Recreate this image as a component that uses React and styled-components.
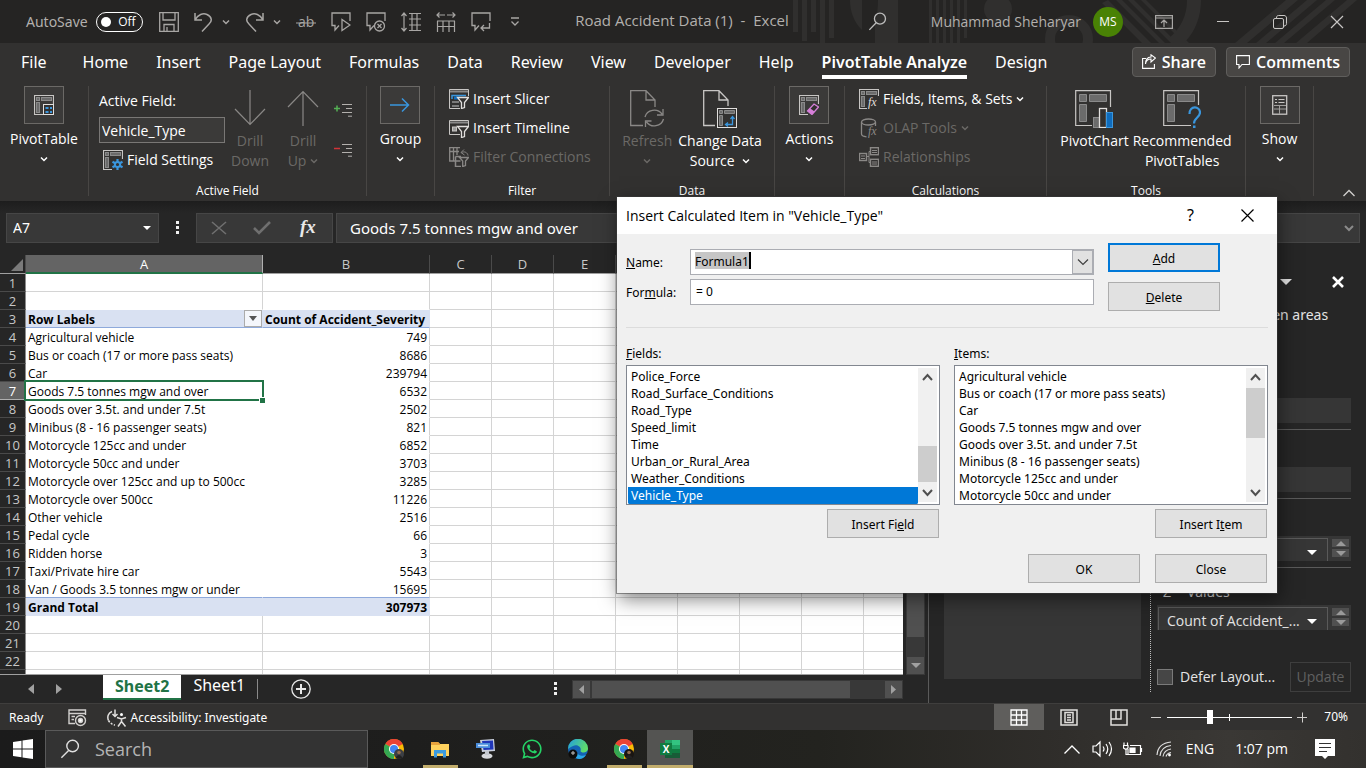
import React from "react";
import styled, { createGlobalStyle } from "styled-components";
import { FaWhatsapp } from "react-icons/fa";

const Global = createGlobalStyle`
  *, *::before, *::after { box-sizing: border-box; }
  html, body, #root { height: 100%; }
  body { margin: 0; overflow: hidden; background: #262626; }
  body, button, input, select {
    font-family: "Open Sans", "Noto Sans", sans-serif;
    font-size: 14px;
    line-height: 20px;
  }
  button { padding: 0; border: 0; background: none; color: inherit; cursor: default; }
  input { min-width: 0; }
  svg { display: block; flex: none; }
`;

const wideFont = `font-family: "Noto Sans", "Open Sans", sans-serif;`;

const Shell = styled.main`
  position: relative;
  display: flex;
  flex-direction: column;
  height: 100vh;
  color: #fff;
`;

/* ---------- small drawings ---------- */

const Svg = ({ w = 20, h = w, children, ...rest }) => (
  <svg width={w} height={h} viewBox={`0 0 ${w} ${h}`} fill="none" aria-hidden="true" {...rest}>
    {children}
  </svg>
);

const Chevron = ({ color = "#fff", w = 8, sw = 1.5 }) => (
  <Svg w={w} h={Math.round(w / 2) + 2}>
    <path d={`M1 1.5 L${w / 2} ${w / 2 + 0.5} L${w - 1} 1.5`} stroke={color} strokeWidth={sw} />
  </Svg>
);

const Triangle = ({ dir = "down", color = "#fff", w = 10, h = 5 }) => {
  const d = {
    down: `M0 0H${w}L${w / 2} ${h}Z`,
    up: `M0 ${h}H${w}L${w / 2} 0Z`,
    left: `M${w} 0V${h}L0 ${h / 2}Z`,
    right: `M0 0V${h}L${w} ${h / 2}Z`,
  }[dir];
  return <Svg w={w} h={h}><path d={d} fill={color} /></Svg>;
};

const Magnifier = ({ w = 20, color = "#bdbdbd" }) => (
  <svg width={w} height={w} viewBox="0 0 20 20" fill="none" aria-hidden="true">
    <circle cx="12.6" cy="7" r="5.8" stroke={color} strokeWidth="1.4" />
    <path d="M8.6 11.4L1.4 18.8" stroke={color} strokeWidth="1.4" />
  </svg>
);

const Grid20 = ({ children, cut = "M19.5 9V.5H.5V19.5H9" }) => (
  <Svg w={20}>
    <path d={cut} stroke="#c8c6c4" strokeWidth="1.2" />
    <rect x="2.5" y="2.5" width="3" height="3" fill="#6b6b6b" stroke="#8a8a8a" />
    <rect x="7.5" y="2.5" width="10" height="3" fill="#6b6b6b" stroke="#8a8a8a" />
    <rect x="2.5" y="7.5" width="3" height="10" fill="#6b6b6b" stroke="#8a8a8a" />
    {children}
  </Svg>
);

const PivotTableIcon = () => (
  <Grid20>
    <rect x="9.5" y="9.5" width="10" height="10" fill="#323130" stroke="#e1dfdd" />
    <path d="M11.5 12h3v2h-3zM16 12h2v2h-2zM11.5 16h3v2h-3zM16 16h2v2h-2z" fill="#3a96dd" />
  </Grid20>
);
const FieldSettingsIcon = () => (
  <Grid20>
    <path d="M14.5 9v11M9.500 11.800l10 5.500M9.500 17.300l10-5.500" stroke="#3a96dd" strokeWidth="2.200" />
    <circle cx="14.5" cy="14.5" r="2.600" fill="#323130" stroke="#3a96dd" strokeWidth="2" />
  </Grid20>
);
const EraserIcon = () => (
  <Grid20>
    <path d="M8.5 16L15 9L19.5 12L13 19.5Z" fill="#323130" stroke="#d67fd9" strokeWidth="1.3" />
    <path d="M8.5 16L11 13.3L15.6 16.6L13 19.5Z" fill="#d67fd9" />
  </Grid20>
);
const FxText = ({ x = 9, y = 17, color = "#e1dfdd" }) => (
  <text x={x} y={y} fill={color} fontFamily="Liberation Serif, serif" fontStyle="italic" fontSize="12">fx</text>
);
const FieldsIcon = () => (
  <Grid20 cut="M19.5 7V.5H.5V19.5H8"><FxText x={9} /></Grid20>
);
const OlapIcon = () => (
  <Svg w={20}>
    <ellipse cx="9.5" cy="4" rx="7" ry="3" stroke="#8a8886" strokeWidth="1.3" />
    <path d="M2.5 4V16c0 1.500 2 2.500 5 2.800M16.500 4v4" stroke="#8a8886" strokeWidth="1.300" />
    <FxText x={9} color="#8a8886" />
  </Svg>
);
const RelationIcon = () => (
  <Svg w={20} stroke="#8a8886">
    <path d="M7 9.500H10V4.500H12M10 9.500V15.500H12" />
    <rect x=".5" y="6.500" width="7" height="7" strokeWidth="1.400" />
    <rect x="11.500" y=".7" width="8" height="7" strokeWidth="1.400" />
    <rect x="11.500" y="12.300" width="8" height="7" strokeWidth="1.400" />
    <path d="M2 9h4M2 11.500h4M13 3.500h5M13 5.500h5M13 15h5M13 17h5" />
  </Svg>
);
const funnel = "M8.500 8.500H19.500L15.500 13.500V18.500L12.500 19.500V13.500Z";
const SlicerIcon = () => (
  <Svg w={20}>
    <path d="M19.500 7V.5H.5V19.500H11" stroke="#c8c6c4" />
    <path d="M1 2.500H19" stroke="#8a8a8a" strokeWidth="2" />
    <path d="M3 10V6.500H17" stroke="#3a96dd" strokeWidth="1.500" />
    <path d="M5 9h6" stroke="#0f6cbd" strokeWidth="3" />
    <path d="M3 13h7M3 17h7" stroke="#7a7a7a" strokeWidth="2" />
    <path d={funnel} fill="#323130" stroke="#e1dfdd" strokeWidth="1.300" />
  </Svg>
);
const TimelineIcon = () => (
  <Svg w={20}>
    <path d="M19.500 8V2.500H.5V16.500H11" stroke="#c8c6c4" />
    <path d="M1 4.500H19" stroke="#8a8a8a" strokeWidth="2" />
    <rect x="3.500" y="9" width="4" height="4" fill="#9a9a9a" stroke="#c8c6c4" />
    <path d={funnel} fill="#323130" stroke="#e1dfdd" strokeWidth="1.300" />
  </Svg>
);
const FilterConnIcon = () => (
  <Svg w={20} stroke="#8a8886">
    <path d="M11 .7H.7V14H6M.7 4.500H10M4.500 .7V14M8 .7V8" strokeWidth="1.300" />
    <path d="M6.500 9.500H12M6.500 9.500V19.500H12M6.500 14h5" strokeWidth="1.500" />
    <path d="M12.500 5.500c3-1.500 6 0 6.500 3M12 5.500l3-3M12 5.500l3.500 2.500" />
    <path d="M10.500 10.500H19.500L16.500 14V18.500L13.700 19.500V14Z" fill="#323130" strokeWidth="1.300" />
  </Svg>
);
const DrillArrow = ({ up }) => (
  <Svg w={32} h={36}>
    <path d={up ? "M16 36V1.500M1 17L16 1.500L31 17" : "M16 0V34.500M1 19L16 34.500L31 19"} stroke="#8a8886" strokeWidth="1.200" />
  </Svg>
);
const ExpandIcon = ({ minus }) => (
  <Svg w={18} h={14}>
    <path d={minus ? "M0 5.500H6" : "M0 5.500H6M3 2.500V8.500"} stroke={minus ? "#d13438" : "#54b054"} strokeWidth="1.500" />
    <path d="M8 1.500H18M12 5.500H18M8 9.500H18M14 13.200H18" stroke="#b3b0ad" />
  </Svg>
);
const RefreshIcon = () => (
  <Svg w={36} h={38} stroke="#8a8886" strokeWidth="1.300">
    <path d="M14 35.500H1.700V.7H17L26 10V17M17 .7V10H26" />
    <path d="M16 27a9.500 9 0 0 1 17-3M34 19v6h-6M34.500 29a9.500 9 0 0 1-17 3M16.500 37v-6h6" />
  </Svg>
);
const ChangeSourceIcon = () => (
  <Svg w={36} h={38}>
    <path d="M13 35.500H1.700V.7H17L26 10V16M17 .7V10H26" stroke="#c8c6c4" strokeWidth="1.300" />
    <rect x="15.500" y="18.500" width="19" height="19" fill="#323130" stroke="#e1dfdd" />
    <path d="M17.500 20.500h3v3h-3zM22.500 20.500h10v3h-10zM17.500 25.500h3v10h-3z" fill="#6b6b6b" stroke="#8a8a8a" />
    <path d="M24 34.500H30.500V27M26 32.500l-2.500 2 2.500 2M28.500 29l2-2.500 2 2.500" stroke="#3a96dd" strokeWidth="1.300" />
  </Svg>
);
const Grid38 = ({ children, cut }) => (
  <Svg w={38}>
    <path d={cut} stroke="#c8c6c4" strokeWidth="1.200" />
    <path d="M4.500 4.500h7v7h-7zM14.500 4.500h17v7h-17zM4.500 14.500h7v17h-7z" fill="#6b6b6b" stroke="#8a8a8a" />
    {children}
  </Svg>
);
const PivotChartIcon = () => (
  <Grid38 cut="M35.500 17V.700H.7V35.500H17">
    <rect x="18.500" y="27.500" width="6" height="10" fill="#6b6b6b" stroke="#8a8a8a" />
    <rect x="24.500" y="18.500" width="7" height="19" fill="#323130" stroke="#e1dfdd" strokeWidth="1.300" />
    <rect x="31.500" y="22.500" width="6" height="15" fill="#0f6cbd" stroke="#3a96dd" />
  </Grid38>
);
const RecommendedIcon = () => (
  <Grid38 cut="M35.500 15V.700H.7V35.500H28">
    <path d="M26.500 24c0-9 10.500-8 10.500-1.500c0 5-6 5-6 11" stroke="#3a96dd" strokeWidth="2.200" />
    <rect x="30" y="35.500" width="2.500" height="2.500" fill="#3a96dd" />
  </Grid38>
);
const ShowIcon = () => (
  <Svg w={16} h={20}>
    <rect x=".7" y=".7" width="14" height="18.500" stroke="#c8c6c4" strokeWidth="1.300" />
    <path d="M3 4.500h2M6.500 4.500h6M3 7.500h2M6.500 7.500h6" stroke="#c8c6c4" />
    <path d="M2 10.500H14M2 14H14M7.500 10.500V19" stroke="#a19f9d" />
  </Svg>
);

/* ---------- title bar ---------- */

const TitleBar = styled.header`
  position: relative;
  display: flex;
  align-items: center;
  height: 43px;
  flex: none;
  background: #252423;
  color: #b3b0ad;
  overflow: hidden;
`;
const Artwork = styled.svg`
  position: absolute;
  right: 0;
  top: 0;
`;
const QuickAccess = styled.div`
  ${wideFont}
  display: flex;
  align-items: center;
  flex: 1 1 0;
  padding-left: 26px;
  gap: 8px;
`;
const SwitchButton = styled.button`
  display: flex;
  align-items: center;
  justify-content: space-between;
  width: 47px;
  height: 20px;
  padding: 0 6px 0 4px;
  border: 1px solid #fff;
  border-radius: 10px;
  color: #fff;
  font-size: 12px;
  line-height: 16px;
  &::before { content: ""; width: 10px; height: 10px; border-radius: 5px; background: #fff; }
`;
const ToolStrip = styled.div`
  display: flex;
  align-items: center;
  gap: 15px;
  padding-left: 8px;
`;
const Pair = styled.span`
  display: flex;
  align-items: center;
  gap: 9px;
`;
const IconButton = styled.button`
  position: relative;
  display: grid;
  place-items: center;
`;
const DocTitle = styled.div`
  position: relative;
  white-space: pre;
  font-size: 15px;
  padding: 0 6px 3px 0;
`;
const TitleRight = styled.div`
  position: relative;
  display: flex;
  align-items: center;
  justify-content: flex-end;
  flex: 1 1 0;
  padding-right: 22px;
`;
const Avatar = styled.span`
  display: grid;
  place-items: center;
  width: 30px;
  height: 30px;
  margin: 0 32px 0 12px;
  border-radius: 15px;
  background: #498205;
  color: #fff;
  font-size: 12px;
`;
const WindowButtons = styled.div`
  display: flex;
  align-items: center;
  gap: 43px;
`;
const SearchSlot = styled.span`
  margin-right: 44px;
`;

const g = "#a8a6a4";
const SaveIcon = () => (
  <Svg w={20} stroke={g} strokeWidth="1.300"><path d="M.7.7H19.300V19.300H.7ZM4 .7V8H16V.7M5 19V12.500H15V19M8 19V15" /></Svg>
);
const UndoIcon = ({ flip }) => (
  <Svg w={19} h={20} stroke={g} strokeWidth="1.500" transform={flip ? "scale(-1 1)" : undefined}>
    <path d="M1 1V8H8M1 8C4 2.500 9 .8 13 2.500C18 5 18.500 9 15 12L8 19.500" />
  </Svg>
);
const StrikeIcon = () => (
  <Svg w={20}>
    <text x="2" y="15" fill={g} fontSize="14" fontFamily="Open Sans, sans-serif">ab</text>
    <path d="M0 11H20" stroke={g} />
  </Svg>
);
const CommentIcon = ({ children }) => (
  <Svg w={20} stroke={g} strokeWidth="1.300">
    <path d="M19 9V1H1V13.500H4V18L8 13.500" />
    {children}
  </Svg>
);
const RowHeightIcon = () => (
  <Svg w={20} stroke={g} strokeWidth="1.200"><path d="M3 1V19M.5 4L3 1L5.500 4M.5 16L3 19L5.500 16M8 1.500H20M8 7H20M8 13H20M8 18.500H20M11 1V19M16 1V19" /></Svg>
);
const ColWidthIcon = () => (
  <Svg w={20} stroke={g} strokeWidth="1.200"><path d="M1 3H9M11 3H19M3.500 .5L1 3L3.500 5.500M16.500 .5L19 3L16.500 5.500M1.500 9V20M7 9V20M13 9V20M18.500 9V20M1 9H19M1 14.500H19" /></Svg>
);

function TitleRow() {
  return (
    <TitleBar>
      <Artwork width="580" height="43" viewBox="0 0 580 43" fill="#302f2e" aria-hidden="true">
        <path d="M7 0h5v32H7zM16 0h5v41h-5zM25 0h5v32h-5zM34 0h5v43h-5zM43 0h5v38h-5zM64 0h12v30C68 22 64 12 64 0ZM92 0h20v43H89V22C91 16 92 8 92 0ZM143 0h3v43h-3zM150 0h3v43h-3zM157 0h3v43h-3zM164 0h3v43h-3zM171 0h3v43h-3zM178 0h3v38h-3z" />
        <circle cx="212" cy="9" r="14" />
        <circle cx="283" cy="39" r="19" fill="none" stroke="#302f2e" strokeWidth="10" />
        <path d="M322 0l43 43h-9L316 3zM336 0l43 43h-6L330 0zM348 0l43 43h-6L342 0zM360 0l43 43h-5L355 0zM449 43L500 0h12L461 43zM470 43L521 0h10L480 43zM489 43L540 0h9L498 43zM510 43L561 0h10L521 43z" />
        <path d="M408 0q0 26-20 43M414 0" stroke="#302f2e" strokeWidth="14" fill="none" />
      </Artwork>
      <QuickAccess>
        <span>AutoSave</span>
        <SwitchButton type="button" role="switch" aria-checked="false" aria-label="AutoSave">Off</SwitchButton>
        <ToolStrip>
          <IconButton aria-label="Save"><SaveIcon /></IconButton>
          <Pair><IconButton aria-label="Undo"><UndoIcon /></IconButton><Chevron color={g} /></Pair>
          <Pair><IconButton aria-label="Redo"><UndoIcon flip /></IconButton><Chevron color={g} /></Pair>
          <IconButton aria-label="Strikethrough"><StrikeIcon /></IconButton>
          <IconButton aria-label="Next comment"><CommentIcon><path d="M11 7.500V18.500L19 13Z" /></CommentIcon></IconButton>
          <IconButton aria-label="Delete comment"><CommentIcon><circle cx="13.500" cy="14" r="5" /><path d="M11.500 12l4 4M15.500 12l-4 4" /></CommentIcon></IconButton>
          <IconButton aria-label="Row height"><RowHeightIcon /></IconButton>
          <IconButton aria-label="Column width"><ColWidthIcon /></IconButton>
          <IconButton aria-label="Previous comment"><CommentIcon><path d="M18.500 11V16H10M13 13L10 16L13 19" /></CommentIcon></IconButton>
          <IconButton aria-label="Customize">
            <Svg w={18} h={10} stroke={g} strokeWidth="1.300"><path d="M5 1H13M5.500 4.500L9 8L12.500 4.500" /></Svg>
          </IconButton>
        </ToolStrip>
      </QuickAccess>
      <DocTitle>{"Road Accident Data (1)  -  Excel"}</DocTitle>
      <TitleRight>
        <SearchSlot><Magnifier w={19} /></SearchSlot>
        <span>Muhammad Sheharyar</span>
        <Avatar>MS</Avatar>
        <WindowButtons>
          <IconButton aria-label="Ribbon display options">
            <Svg w={18} h={14} stroke={g} strokeWidth="1.200"><path d="M.6.6H17.400V13.400H.6ZM1 3H17M9 12V5.500M6 8L9 5L12 8" /></Svg>
          </IconButton>
          <IconButton aria-label="Minimize"><Svg w={14} h={14} stroke="#c8c6c4"><path d="M1 6.500H13" /></Svg></IconButton>
          <IconButton aria-label="Restore">
            <Svg w={14} h={14} stroke="#c8c6c4"><rect x=".5" y="3.500" width="10" height="10" rx="1.500" /><path d="M3.500 3C3.500 1.500 4 .5 5.500 .5H11c1.500 0 2.500 1 2.500 2.500V8.500c0 1.500-1 2.500-2.500 2.500" /></Svg>
          </IconButton>
          <IconButton aria-label="Close window"><Svg w={14} h={14} stroke="#c8c6c4" strokeWidth="1.200"><path d="M1 1L13 13M13 1L1 13" /></Svg></IconButton>
        </WindowButtons>
      </TitleRight>
    </TitleBar>
  );
}

/* ---------- ribbon ---------- */

const TabRow = styled.nav`
  display: flex;
  align-items: center;
  height: 37px;
  flex: none;
  gap: 28px;
  padding: 0 16px 0 21px;
  background: #323130;
`;
const Tab = styled.button`
  ${wideFont}
  position: relative;
  font-size: 16px;
  line-height: 24px;
  white-space: nowrap;
  margin-right: ${(p) => (p.$first ? 8 : 0)}px;
  font-weight: ${(p) => (p.$active ? 600 : 400)};
  &::after {
    content: "";
    display: ${(p) => (p.$active ? "block" : "none")};
    position: absolute;
    left: 0;
    right: 0;
    bottom: -5px;
    height: 4px;
    background: #fff;
  }
`;
const TabActions = styled.div`
  display: flex;
  gap: 10px;
  margin-left: auto;
`;
const ActionButton = styled.button`
  display: flex;
  align-items: center;
  gap: 6px;
  height: 30px;
  padding: 0 9px;
  border: 1px solid #5f5e5c;
  border-radius: 4px;
  background: #484644;
  font-size: 16px;
  font-weight: 600;
`;

const RibbonBar = styled.div`
  display: flex;
  height: 121px;
  flex: none;
  padding-top: 6px;
  background: #323130;
`;
const GroupBox = styled.section`
  display: flex;
  flex-direction: column;
  flex: none;
  width: ${(p) => p.$w}px;
  height: 110px;
  border-right: 1px solid #484644;
`;
const GroupBody = styled.div`
  display: flex;
  flex: 1;
  min-height: 0;
  justify-content: ${(p) => p.$justify || "center"};
  padding: ${(p) => p.$pad || "0"};
  gap: ${(p) => p.$gap || 0}px;
`;
const GroupLabel = styled.div`
  height: 12px;
  font-size: 12px;
  line-height: 14px;
  text-align: center;
`;
const BoxedButton = styled.button`
  display: flex;
  flex-direction: column;
  align-items: center;
  height: 83px;
`;
const IconFrame = styled.span`
  display: grid;
  place-items: center;
  width: 40px;
  height: 38px;
  margin-bottom: 5px;
  border: 1px solid #6b6966;
  background: #3b3a39;
`;
const BigButton = styled.button`
  display: flex;
  flex-direction: column;
  align-items: center;
  height: 86px;
  padding-top: 4px;
  white-space: pre;
  color: ${(p) => (p.disabled ? "#6b6966" : "#fff")};
`;
const BigIcon = styled.span`
  display: grid;
  place-items: start center;
  height: 41px;
`;
const WithChevron = styled.span`
  display: flex;
  align-items: center;
  justify-content: center;
  gap: 4px;
  min-height: 20px;
`;
const Stack = styled.div`
  display: flex;
  flex-direction: column;
  gap: ${(p) => p.$gap || 0}px;
`;
const DrillPair = styled.div`
  display: flex;
  gap: 18px;
`;
const Lines = styled(Stack)`
  height: 84px;
  justify-content: space-between;
`;
const LineButton = styled.button`
  display: flex;
  align-items: center;
  gap: 4px;
  height: ${(p) => p.$h || 26}px;
  padding-left: ${(p) => p.$inset || 0}px;
  white-space: nowrap;
  color: ${(p) => (p.disabled ? "#6b6966" : "#fff")};
`;
const FieldLabel = styled.label`
  height: 28px;
  line-height: 30px;
`;
const FieldInput = styled.input`
  width: 126px;
  height: 26px;
  margin-top: 3px;
  padding: 0 2px;
  border: 1px solid #797775;
  background: #3b3a39;
  color: #fff;
`;
const Collapse = styled.button`
  align-self: flex-end;
  margin: 0 11px 4px auto;
`;

const tabs = ["File", "Home", "Insert", "Page Layout", "Formulas", "Data", "Review", "View", "Developer", "Help", "PivotTable Analyze", "Design"];

const Boxed = ({ icon, label }) => (
  <BoxedButton type="button">
    <IconFrame>{icon}</IconFrame>
    <span>{label}</span>
    <WithChevron><Chevron /></WithChevron>
  </BoxedButton>
);

const Group = ({ w, label, children, ...body }) => (
  <GroupBox $w={w}>
    <GroupBody {...body}>{children}</GroupBody>
    <GroupLabel>{label}</GroupLabel>
  </GroupBox>
);

function Ribbon() {
  return (
    <>
      <TabRow>
        {tabs.map((t, i) => (
          <Tab key={t} type="button" $first={i === 0} $active={t === "PivotTable Analyze"}>{t}</Tab>
        ))}
        <TabActions>
          <ActionButton type="button">
            <Svg w={14} h={15} stroke="#fff" strokeWidth="1.100"><path d="M4 4.500H.6V14.400H12.400V10M3.500 10C4 6 6.500 5 9 5V8L13.500 4L9 .8V3C5.500 3.200 3.500 6 3.500 10Z" /></Svg>
            Share
          </ActionButton>
          <ActionButton type="button">
            <Svg w={14} h={14} stroke="#fff" strokeWidth="1.100"><path d="M.6.6H13.400V9.500H6L3 13V9.500H.6Z" /></Svg>
            Comments
          </ActionButton>
        </TabActions>
      </TabRow>
      <RibbonBar>
        <Group w={89}><Boxed icon={<PivotTableIcon />} label="PivotTable" /></Group>
        <Group w={278} label="Active Field" $justify="flex-start" $pad="0 0 0 10px" $gap={6}>
          <Stack>
            <FieldLabel htmlFor="active-field">Active Field:</FieldLabel>
            <FieldInput id="active-field" defaultValue="Vehicle_Type" />
            <LineButton type="button" $h={34} $inset={4}><FieldSettingsIcon />Field Settings</LineButton>
          </Stack>
          <DrillPair>
            <BigButton type="button" disabled><BigIcon><DrillArrow /></BigIcon><span>Drill</span><span>Down</span></BigButton>
            <BigButton type="button" disabled>
              <BigIcon><DrillArrow up /></BigIcon><span>Drill</span>
              <WithChevron>Up<Chevron color="#6b6966" /></WithChevron>
            </BigButton>
          </DrillPair>
          <GroupBody $justify="flex-start" $pad="17px 0 0 9px">
            <Stack $gap={26}>
              <IconButton aria-label="Expand field"><ExpandIcon /></IconButton>
              <IconButton aria-label="Collapse field"><ExpandIcon minus /></IconButton>
            </Stack>
          </GroupBody>
        </Group>
        <Group w={68}><Boxed icon={<Svg w={20} h={16} stroke="#3a96dd" strokeWidth="1.500"><path d="M0 8H18.500M12 1.500L18.500 8L12 14.500" /></Svg>} label="Group" /></Group>
        <Group w={175} label="Filter" $justify="flex-start" $pad="0 0 0 14px">
          <Lines>
            <LineButton type="button"><SlicerIcon />Insert Slicer</LineButton>
            <LineButton type="button"><TimelineIcon />Insert Timeline</LineButton>
            <LineButton type="button" disabled><FilterConnIcon />Filter Connections</LineButton>
          </Lines>
        </Group>
        <Group w={165} label="Data" $gap={6}>
          <BigButton type="button" disabled>
            <BigIcon><RefreshIcon /></BigIcon><span>Refresh</span>
            <WithChevron><Chevron color="#6b6966" /></WithChevron>
          </BigButton>
          <BigButton type="button">
            <BigIcon><ChangeSourceIcon /></BigIcon><span>Change Data</span>
            <WithChevron>Source <Chevron /></WithChevron>
          </BigButton>
        </Group>
        <Group w={70}><Boxed icon={<EraserIcon />} label="Actions" /></Group>
        <Group w={202} label="Calculations" $justify="flex-start" $pad="0 0 0 14px">
          <Lines>
            <LineButton type="button"><FieldsIcon />Fields, Items, &amp; Sets <Chevron /></LineButton>
            <LineButton type="button" disabled><OlapIcon />OLAP Tools <Chevron color="#6b6966" /></LineButton>
            <LineButton type="button" disabled><RelationIcon />Relationships</LineButton>
          </Lines>
        </Group>
        <Group w={199} label="Tools" $gap={4}>
          <BigButton type="button"><BigIcon><PivotChartIcon /></BigIcon><span>PivotChart</span></BigButton>
          <BigButton type="button"><BigIcon><RecommendedIcon /></BigIcon><span>Recommended</span><span>PivotTables</span></BigButton>
        </Group>
        <Group w={68}><Boxed icon={<ShowIcon />} label="Show" /></Group>
        <Collapse aria-label="Collapse the ribbon"><Svg w={12} h={8} stroke="#d2d0ce" strokeWidth="1.300"><path d="M.5 7L6 1.500L11.500 7" /></Svg></Collapse>
      </RibbonBar>
    </>
  );
}

/* ---------- formula bar ---------- */

const FormulaRow = styled.div`
  display: flex;
  align-items: center;
  height: 54px;
  flex: none;
  padding: 0 6px;
  background: linear-gradient(#1d1d1d, #262626 12px);
`;
const BarBox = styled.div`
  display: flex;
  align-items: center;
  height: 30px;
  border: 1px solid #464646;
  background: #383838;
  flex: ${(p) => (p.$grow ? "1 1 0" : "none")};
  width: ${(p) => (p.$w ? `${p.$w}px` : "auto")};
  margin-right: ${(p) => p.$mr || 0}px;
  padding: ${(p) => p.$pad || "0"};
`;
const BarInput = styled.input`
  ${wideFont}
  flex: 1;
  border: 0;
  padding: 0;
  outline: 0;
  background: none;
  color: #fff;
  font-size: ${(p) => p.$size || 14}px;
`;
const BarIcons = styled.div`
  display: flex;
  flex: 1;
  align-items: center;
  justify-content: space-between;
`;
const Dots = () => (
  <Svg w={4} h={14}><path d="M0 0h3v3H0zM0 5h3v3H0zM0 10h3v3H0z" fill="#f0f0f0" /></Svg>
);
const DotsSlot = styled.span`
  display: grid;
  place-items: center;
  width: 37px;
`;

function FormulaBar() {
  return (
    <FormulaRow>
      <BarBox $w={153} $pad="0 7px 0 6px">
        <BarInput aria-label="Name box" defaultValue="A7" />
        <Triangle w={8} h={4} />
      </BarBox>
      <DotsSlot><Dots /></DotsSlot>
      <BarBox $w={137} $mr={3} $pad="0 12px 0 14px">
        <BarIcons>
          <IconButton aria-label="Cancel"><Svg w={16} h={14} stroke="#6f6f6f" strokeWidth="1.600"><path d="M1 1L15 13M15 1L1 13" /></Svg></IconButton>
          <IconButton aria-label="Enter"><Svg w={18} h={14} stroke="#6f6f6f" strokeWidth="2.600"><path d="M1 7L6 12L17 1" /></Svg></IconButton>
          <IconButton aria-label="Insert function">
            <Svg w={24} h={26}><text x="4" y="18" fill="#e8e8e8" fontFamily="Liberation Serif, serif" fontStyle="italic" fontWeight="700" fontSize="19">fx</text></Svg>
          </IconButton>
        </BarIcons>
      </BarBox>
      <BarBox $grow $pad="0 5px 0 13px">
        <BarInput $size={15} aria-label="Formula bar" defaultValue="Goods 7.5 tonnes mgw and over" />
        <Svg w={10} h={7} stroke="#8a8a8a" strokeWidth="2"><path d="M1 1L5 5L9 1" /></Svg>
      </BarBox>
    </FormulaRow>
  );
}

/* ---------- worksheet ---------- */

const Work = styled.div`
  display: flex;
  flex: 1 1 0;
  min-height: 0;
  background: #262626;
`;
const SheetSide = styled.div`
  display: flex;
  flex-direction: column;
  flex: 1 1 0;
  min-width: 0;
`;
const SheetArea = styled.div`
  display: flex;
  flex: 1 1 0;
  min-height: 0;
`;
const SheetClip = styled.div`
  flex: 1 1 0;
  min-width: 0;
  overflow: hidden;
  border-bottom: 1px solid #a0a0a0;
`;
const SheetTable = styled.table`
  width: 926px;
  table-layout: fixed;
  border-collapse: separate;
  border-spacing: 0;
  background: #fff;
  color: #000;
  font-size: 12px;
  line-height: 15px;
  th, td { padding: 1px 2px 0; height: 18px; white-space: nowrap; }
  td { padding-top: 2px; }
  thead th { padding: 0; height: 19px; }
`;
const ColHead = styled.th`
  background: ${(p) => (p.$on ? "#646464" : "#262626")};
  color: ${(p) => (p.$on ? "#fff" : "#c8c8c8")};
  border-right: 1px solid ${(p) => (p.$on ? "#b0b0b0" : "#4a4a4a")};
  border-bottom: ${(p) => (p.$on ? "2px solid #217346" : "1px solid #a0a0a0")};
  font: 400 13px/16px "Open Sans", sans-serif;
`;
const Corner = styled(ColHead)`
  svg { margin: 2px 2px 0 auto; }
`;
const RowHead = styled.th`
  background: ${(p) => (p.$on ? "#646464" : "#262626")};
  color: ${(p) => (p.$on ? "#fff" : "#c8c8c8")};
  border-right: 1px solid #8c8c8c;
  border-bottom: 1px solid ${(p) => (p.$on ? "#b0b0b0" : "#4a4a4a")};
  font: 400 13px/16px "Open Sans", sans-serif;
`;
const Cell = styled.td`
  position: relative;
  border-right: 1px solid ${(p) => (p.$noRight ? (p.$band ? "#d9e1f2" : "#fff") : "#d4d4d4")};
  border-bottom: 1px solid ${(p) => (p.$rule ? "#8ea9db" : p.$noBottom ? (p.$band ? "#d9e1f2" : "#fff") : "#d4d4d4")};
  background: ${(p) => (p.$band ? "#d9e1f2" : "#fff")};
  font-weight: ${(p) => (p.$band ? 700 : 400)};
  text-align: ${(p) => (p.$num ? "right" : "left")};
`;
const Selection = styled.span`
  position: absolute;
  inset: -2px;
  border: 2px solid #217346;
  z-index: 1;
  &::after {
    content: "";
    position: absolute;
    right: -3px;
    bottom: -4px;
    width: 6px;
    height: 6px;
    border: 1px solid #fff;
    border-width: 1px 0 0 1px;
    background: #217346;
  }
`;
const FilterButton = styled.button`
  position: absolute;
  right: 0;
  top: 0;
  display: grid;
  place-items: center;
  width: 18px;
  height: 17px;
  border: 1px solid #ababab;
  background: #f4f6fb;
`;
const VScroll = styled.div`
  display: flex;
  flex-direction: column;
  width: 19px;
  margin: 0 3px 0 3px;
  padding: 0 1px 1px;
  background: #383838;
`;
const VThumb = styled.div`
  height: 382px;
  margin-bottom: auto;
  background: #505050;
`;
const ScrollButton = styled.button`
  display: grid;
  place-items: center;
  width: 17px;
  height: 17px;
  background: #505050;
`;

const rows = [
  ["Agricultural vehicle", 749],
  ["Bus or coach (17 or more pass seats)", 8686],
  ["Car", 239794],
  ["Goods 7.5 tonnes mgw and over", 6532],
  ["Goods over 3.5t. and under 7.5t", 2502],
  ["Minibus (8 - 16 passenger seats)", 821],
  ["Motorcycle 125cc and under", 6852],
  ["Motorcycle 50cc and under", 3703],
  ["Motorcycle over 125cc and up to 500cc", 3285],
  ["Motorcycle over 500cc", 11226],
  ["Other vehicle", 2516],
  ["Pedal cycle", 66],
  ["Ridden horse", 3],
  ["Taxi/Private hire car", 5543],
  ["Van / Goods 3.5 tonnes mgw or under", 15695],
];
const sheet = [null, null, ["Row Labels", "Count of Accident_Severity"], ...rows, ["Grand Total", 307973], null, null, null, null];
const extraCols = ["C", "D", "E", "F", "G", "H", "I", "J"];

function Worksheet() {
  return (
    <SheetClip>
      <SheetTable>
        <colgroup>
          <col style={{ width: 26 }} />
          <col style={{ width: 237 }} />
          <col style={{ width: 167 }} />
          {extraCols.map((c) => <col key={c} style={{ width: 62 }} />)}
        </colgroup>
        <thead>
          <tr>
            <Corner aria-label="Select all"><Svg w={12} h={12}><path d="M12 0V12H0Z" fill="#7a7a7a" /></Svg></Corner>
            <ColHead $on>A</ColHead>
            <ColHead>B</ColHead>
            {extraCols.map((c) => <ColHead key={c}>{c}</ColHead>)}
          </tr>
        </thead>
        <tbody>
          {sheet.map((r, i) => {
            const n = i + 1;
            const band = n === 3 || n === 19;
            const rule = n === 3 || n === 18;
            const inside = n > 3 && n < 19;
            return (
              <tr key={n}>
                <RowHead $on={n === 7} scope="row">{n < 23 ? n : null}</RowHead>
                <Cell $band={band} $rule={rule} $noRight={!!r} $noBottom={inside || band || n === 2}>
                  {r && r[0]}
                  {n === 3 && <FilterButton aria-label="Filter row labels"><Triangle w={8} h={5} color="#555" /></FilterButton>}
                  {n === 7 && <Selection />}
                </Cell>
                <Cell $band={band} $rule={rule} $num={n > 3} $noRight={band} $noBottom={inside || band || n === 2}>{r && r[1]}</Cell>
                {extraCols.map((c) => <Cell key={c} />)}
              </tr>
            );
          })}
        </tbody>
      </SheetTable>
    </SheetClip>
  );
}

const SheetTabs = styled.div`
  display: flex;
  height: 28px;
  flex: none;
  padding-right: 25px;
  background: #262626;
`;
const TabArrows = styled.div`
  display: flex;
  align-items: center;
  gap: 22px;
  width: 103px;
  padding-left: 28px;
`;
const SheetTab = styled.button`
  ${wideFont}
  height: ${(p) => (p.$active ? 25 : 20)}px;
  padding: 0 12px;
  font-size: 16px;
  line-height: 21px;
  font-weight: ${(p) => (p.$active ? 700 : 400)};
  color: ${(p) => (p.$active ? "#217346" : "#fff")};
  background: ${(p) => (p.$active ? "#fff" : "none")};
  border-bottom: ${(p) => (p.$active ? "2px solid #217346" : "0")};
`;
const TabDivider = styled.span`
  width: 1px;
  height: 20px;
  margin: 4px 33px 0 0;
  background: #8a8a8a;
`;
const HScrollSlot = styled.div`
  display: flex;
  align-items: center;
  margin-left: auto;
  gap: 14px;
`;
const HScroll = styled.div`
  display: flex;
  width: 331px;
  height: 19px;
  padding: 1px;
  gap: 2px;
  background: #383838;
`;
const HThumb = styled.div`
  width: 258px;
  margin-right: auto;
  background: #505050;
`;

/* ---------- fields pane ---------- */

const Pane = styled.aside`
  display: flex;
  flex-direction: column;
  width: 438px;
  flex: none;
  padding: 0 15px 11px 15px;
  border-left: 1px solid #5a5a5a;
  color: #e4e4e4;
`;
const PaneHead = styled.div`
  display: flex;
  align-items: center;
  height: 50px;
  flex: none;
  gap: 40px;
  padding: 4px 7px 0 0;
  color: #fff;
`;
const PaneTitle = styled.h2`
  flex: 1;
  margin: 0;
  font-size: 18px;
  font-weight: 400;
`;
const PaneIntro = styled.p`
  ${wideFont}
  margin: 0 0 0 213px;
  height: 56px;
  flex: none;
`;
const PaneCols = styled.div`
  display: flex;
  flex: 1 1 0;
  min-height: 0;
`;
const FieldList = styled.div`
  flex: 1 1 0;
  margin: 0 9px 13px 0;
  background: #363636;
`;
const Areas = styled.div`
  display: flex;
  flex-direction: column;
  width: 201px;
  padding-left: 6px;
  border-left: 1px dotted #bdbdbd;
`;
const Area = styled.div`
  display: flex;
  flex-direction: column;
  height: ${(p) => (p.$last ? 63 : 69)}px;
  flex: none;
  border-bottom: ${(p) => (p.$last ? "0" : "1px solid #5a5a5a")};
`;
const AreaLabel = styled.div`
  display: flex;
  align-items: flex-end;
  gap: 16px;
  height: 37px;
  padding: 0 0 3px 6px;
`;
const AreaBox = styled.div`
  display: flex;
  gap: 4px;
  height: 25px;
  padding: 2px 2px 0 1px;
  background: #363636;
`;
const AreaItem = styled.button`
  display: flex;
  align-items: center;
  justify-content: space-between;
  flex: 1;
  padding: 4px 10px 0 8px;
  border: 1px solid #5a5a5a;
  border-bottom: 0;
  white-space: nowrap;
`;
const Spin = styled.div`
  display: flex;
  flex-direction: column;
  gap: 2px;
  padding-top: 1px;
`;
const SpinButton = styled.button`
  display: grid;
  place-items: center;
  width: 17px;
  height: 8px;
  background: #505050;
`;
const DeferRow = styled.div`
  display: flex;
  align-items: center;
  justify-content: space-between;
  margin-top: auto;
  height: 30px;
`;
const DeferLabel = styled.label`
  display: flex;
  align-items: center;
  gap: 7px;
`;
const CheckBox = styled.input`
  appearance: none;
  width: 16px;
  height: 16px;
  margin: 0;
  border: 1px solid #7a7a7a;
  background: #464646;
`;
const UpdateButton = styled.button`
  width: 61px;
  height: 30px;
  border: 1px solid #3e3e3e;
  color: #606060;
`;

const areas = [["▼", "Filters"], ["▥", "Columns"], ["☰", "Rows", "Vehicle_Type"], ["Σ", "Values", "Count of Accident_..."]];

function FieldsPane() {
  return (
    <Pane>
      <PaneHead>
        <PaneTitle>PivotTable Fields</PaneTitle>
        <IconButton aria-label="Task pane options"><Triangle w={12} h={6} color="#e4e4e4" /></IconButton>
        <IconButton aria-label="Close pane"><Svg w={12} h={12} stroke="#fff" strokeWidth="2.600"><path d="M1 1L11 11M11 1L1 11" /></Svg></IconButton>
      </PaneHead>
      <PaneIntro>Drag fields between areas below:</PaneIntro>
      <PaneCols>
        <FieldList />
        <Areas>
          {areas.map(([mark, label, item]) => (
            <Area key={label} $last={label === "Values"}>
              <AreaLabel><span>{mark}</span>{label}</AreaLabel>
              <AreaBox>
                {item && (
                  <>
                    <AreaItem type="button"><span>{item}</span><Triangle w={10} h={5} /></AreaItem>
                    <Spin>
                      <SpinButton aria-label={`Move ${label} up`}><Triangle dir="up" w={10} h={5} color="#9a9a9a" /></SpinButton>
                      <SpinButton aria-label={`Move ${label} down`}><Triangle w={10} h={5} color="#9a9a9a" /></SpinButton>
                    </Spin>
                  </>
                )}
              </AreaBox>
            </Area>
          ))}
          <DeferRow>
            <DeferLabel><CheckBox type="checkbox" />Defer Layout...</DeferLabel>
            <UpdateButton type="button" disabled>Update</UpdateButton>
          </DeferRow>
        </Areas>
      </PaneCols>
    </Pane>
  );
}

/* ---------- status bar ---------- */

const StatusBar = styled.footer`
  ${wideFont}
  display: flex;
  align-items: center;
  height: 27px;
  flex: none;
  padding: 0 18px 0 9px;
  border-top: 1px solid #3f3e3d;
  background: #323130;
  font-size: 12px;
  line-height: 16px;
`;
const StatusItem = styled.span`
  display: flex;
  align-items: center;
  gap: 3px;
  padding-top: 2px;
  margin-right: ${(p) => p.$mr || 0}px;
`;
const ViewButtons = styled.div`
  display: flex;
  align-self: stretch;
  margin: 0 7px 0 auto;
`;
const ViewButton = styled.button`
  display: grid;
  place-items: center;
  width: 50px;
  background: ${(p) => (p.$on ? "#5f5e5c" : "none")};
`;
const ZoomRange = styled.input`
  appearance: none;
  width: 125px;
  height: 14px;
  margin: 0 5px;
  background:
    linear-gradient(#fff, #fff) 62px center / 1px 7px no-repeat,
    linear-gradient(#fff, #fff) 0 center / 100% 1px no-repeat;
  &::-webkit-slider-thumb { appearance: none; width: 6px; height: 14px; background: #fff; }
`;
const ZoomValue = styled.span`
  margin-left: 16px;
`;

function Status() {
  return (
    <StatusBar>
      <StatusItem $mr={25}>Ready</StatusItem>
      <StatusItem $mr={20}>
        <Svg w={19} h={18} stroke="#d2d0ce" strokeWidth="1.400"><path d="M17.500 6V1H1V14.500H7M1 4.500H17M3.500 7.500H7M3.500 10.500H6" /><circle cx="12.500" cy="11.500" r="5" /><circle cx="12.500" cy="11.500" r="2" fill="#fff" /></Svg>
      </StatusItem>
      <StatusItem>
        <Svg w={20} h={18} stroke="#e1dfdd" strokeWidth="1.500"><path d="M8 .5V7M5.500 5L8 7.500L10.500 5M5 2.500C1 4 0 8 1.500 11.500" /><path d="M1.500 11.500C3 14 5 15.500 8 16" strokeDasharray="2 1.500" /><circle cx="14.500" cy="5.500" r="1.500" fill="#fff" stroke="none" /><path d="M10 8.500L14.500 10L19 8.500M14.500 10V12.500M11 17.500L14.500 12.500L18.500 17.500" /></Svg>
        Accessibility: Investigate
      </StatusItem>
      <ViewButtons>
        <ViewButton $on aria-label="Normal view"><Svg w={18} h={17} stroke="#fff" strokeWidth="1.300"><path d="M1 1H17V16H1ZM1 6H17M1 11H17M6.500 1V16M11.500 1V16" /></Svg></ViewButton>
        <ViewButton aria-label="Page layout view"><Svg w={18} h={17} stroke="#e1dfdd" strokeWidth="1.500"><path d="M1 1H17V16H1ZM5 3.500H13V13.500H5ZM7 6H11M7 8.500H11M7 11H11" /></Svg></ViewButton>
        <ViewButton aria-label="Page break view"><Svg w={18} h={17} stroke="#e1dfdd" strokeWidth="1.500"><path d="M1 1H17V16H1ZM6 1V10M11 1V10M1 10H11.700" /></Svg></ViewButton>
      </ViewButtons>
      <IconButton aria-label="Zoom out"><Svg w={11} h={12} stroke="#d2d0ce"><path d="M0 6.500H10" /></Svg></IconButton>
      <ZoomRange type="range" aria-label="Zoom" min="0" max="200" defaultValue="67" />
      <IconButton aria-label="Zoom in"><Svg w={11} h={12} stroke="#d2d0ce"><path d="M0 6.500H10M5.500 1.500V11.500" /></Svg></IconButton>
      <ZoomValue>70%</ZoomValue>
    </StatusBar>
  );
}

/* ---------- taskbar ---------- */

const Taskbar = styled.footer`
  display: flex;
  height: 38px;
  flex: none;
  background: linear-gradient(90deg, #1b1b1b, #1e1e1d 30%, #23231f 60%, #302e2b 78%, #3a3835 90%, #33312e);
`;
const StartButton = styled.button`
  display: grid;
  place-items: center;
  width: 45px;
`;
const TaskSearch = styled.label`
  display: flex;
  align-items: center;
  width: 323px;
  gap: 15px;
  padding-left: 14px;
  border: 1px solid #5a5a5a;
  background: #333;
  margin-right: 3px;
`;
const TaskInput = styled.input`
  width: 200px;
  padding: 0;
  border: 0;
  outline: 0;
  background: none;
  font-size: 18px;
  line-height: 24px;
  &::placeholder { color: #b4b4b4; opacity: 1; }
`;
const TaskApp = styled.button`
  display: grid;
  place-items: center;
  width: 46px;
  padding: 3px 0 0;
  border-bottom: 3px solid transparent;
  background: ${(p) => (p.$active ? "#545452" : p.$open ? "linear-gradient(#c2ad6c, #c2ad6c) center 35px / 35px 3px no-repeat border-box" : "none")};
  border-color: ${(p) => (p.$active ? "#c2ad6c" : "transparent")};
`;
const Tray = styled.div`
  display: flex;
  align-items: center;
  margin-left: auto;
  padding-right: 31px;
`;
const TrayItem = styled.span`
  margin-right: ${(p) => p.$mr || 0}px;
`;

const Chrome = ({ dark }) => (
  <Svg w={20}>
    <circle cx="10" cy="10" r="10" fill="#fbbc05" />
    <path d="M10 10L1.300 5A10 10 0 0 1 18.700 5Z" fill="#ea4335" />
    <path d="M10 10L1.300 5A10 10 0 0 0 10 20Z" fill="#34a853" />
    <circle cx="10" cy="10" r="5" fill="#fff" />
    <circle cx="10" cy="10" r="4" fill="#4285f4" />
    <circle cx="15" cy="15" r="5" fill={dark ? "#1a1512" : "#3c3f45"} />
    <circle cx="15" cy="13.500" r="1.800" fill="#8f6a4e" />
    <path d="M12 18q3-4 6 0v1q-3 1.500-6 0Z" fill="#222" />
  </Svg>
);

function WindowsBar() {
  return (
    <Taskbar>
      <StartButton aria-label="Start"><Svg w={20}><path d="M0 3L8.500 1.700V9.500H0ZM9.500 1.500L20 0V9.500H9.500ZM0 10.500H8.500V18.300L0 17ZM9.500 10.500H20V20L9.500 18.500Z" fill="#fff" /></Svg></StartButton>
      <TaskSearch>
        <Magnifier w={20} color="#e0e0e0" />
        <TaskInput placeholder="Search" aria-label="Search" />
      </TaskSearch>
      <TaskApp aria-label="Chrome"><Chrome /></TaskApp>
      <TaskApp $open aria-label="File Explorer">
        <Svg w={18} h={17}><path d="M0 1H7L9 3H18V15H0Z" fill="#ffd25e" /><path d="M0 1H7L9 3V4H0Z" fill="#e8a33d" /><path d="M3 9H15V16.500H12V12.500H6V16.500H3Z" fill="#3c9be0" /></Svg>
      </TaskApp>
      <TaskApp aria-label="Remote desktop">
        <Svg w={20}><path d="M4 1L18 0L19 12L6 13Z" fill="#c9cfdd" /><path d="M6 2L17 1.500L17.500 10.500L7.500 11Z" fill="#2036b8" /><path d="M0 4H14V9H0Z" fill="#4a8ddb" /><path d="M2 6.500H12" stroke="#cfe4fb" strokeWidth="1.500" /><ellipse cx="11" cy="17" rx="5.500" ry="2.800" fill="#d6d8dc" /><path d="M9 12h4v4H9z" fill="#c3c7ce" /></Svg>
      </TaskApp>
      <TaskApp aria-label="WhatsApp"><FaWhatsapp size={22} color="#25d366" /></TaskApp>
      <TaskApp aria-label="Edge">
        <Svg w={20}>
          <defs><linearGradient id="edge" x1="0" y1="0" x2="1" y2=".4"><stop offset="0" stopColor="#1f9de3" /><stop offset="1" stopColor="#5fdc6b" /></linearGradient></defs>
          <circle cx="10" cy="10" r="10" fill="#1363b5" />
          <path d="M0 10A10 10 0 0 1 20 9.500C20 14 13 14.500 12.500 12C14 8 9 5 5 7C2 8 0 10 0 10Z" fill="url(#edge)" />
          <path d="M8 12c1 4 6 6 10 4c-3 5-9 5-12 1Z" fill="#2aa8e8" />
          <circle cx="5" cy="15" r="4.500" fill="#0c0c0c" /><circle cx="5" cy="14" r="1.200" stroke="#fff" strokeWidth=".8" />
        </Svg>
      </TaskApp>
      <TaskApp $open aria-label="Chrome, second window"><Chrome dark /></TaskApp>
      <TaskApp $active aria-label="Excel">
        <Svg w={20} h={18}>
          <path d="M5 0H12V9H5Z" fill="#21a366" /><path d="M12 0H20V5H12Z" fill="#33c481" /><path d="M12 5H20V9H12Z" fill="#21a366" /><path d="M5 9H20V18H5Z" fill="#185c37" /><path d="M12 9H20V13H12Z" fill="#107c41" />
          <rect y="3" width="12" height="12" fill="#107c41" />
          <text x="6" y="13" textAnchor="middle" fill="#fff" fontFamily="Open Sans, sans-serif" fontWeight="700" fontSize="10">X</text>
        </Svg>
      </TaskApp>
      <Tray>
        <TrayItem $mr={12}><Svg w={16} h={9} stroke="#fff" strokeWidth="1.300"><path d="M.5 8.500L8 1L15.500 8.500" /></Svg></TrayItem>
        <TrayItem $mr={10}><Svg w={21} h={18} stroke="#fff" strokeWidth="1.200"><path d="M1 6H4L8 2V16L4 12H1ZM11 6.500Q13 9 11 11.500M14 4Q17.500 9 14 14M17 2Q22 9 17 16" /></Svg></TrayItem>
        <TrayItem $mr={13}><Svg w={20} h={14} stroke="#fff" strokeWidth="1.200"><path d="M5 7V12.500H17.500V3.500H7M18.500 6V10M1 .5V3M4.500 .5V3M.5 3.500H5V6L3 7.500L.5 6ZM3 7.500V12.500H5" /><path d="M7 6H12V10.500H7Z" fill="#fff" /></Svg></TrayItem>
        <TrayItem $mr={14}><Svg w={16} h={16} stroke="#e0e0e0" strokeWidth="1.200"><path d="M1 14Q2 2 15 1M4 15Q5 5.500 15 4.500M7 15.500Q8 9 15 8M10 15.500Q11 12 15 11.500" /><circle cx="13.500" cy="14" r="1.400" fill="#fff" stroke="none" /></Svg></TrayItem>
        <TrayItem $mr={21}>ENG</TrayItem>
        <TrayItem $mr={27}>1:07 pm</TrayItem>
        <Svg w={20}><path d="M0 0H20V17H13L10 20L7 17H0Z" fill="#fff" /><path d="M4 4.500H16M4 8.500H16M4 12.500H12" stroke="#333" strokeWidth="1.200" /></Svg>
      </Tray>
    </Taskbar>
  );
}

/* ---------- dialog ---------- */

const Dialog = styled.div`
  position: absolute;
  left: 617px;
  top: 197px;
  width: 660px;
  background: #f0f0f0;
  color: #000;
  font-size: 12px;
  line-height: 17px;
  box-shadow: 0 0 0 1px rgba(60, 60, 60, 0.5), 2px 6px 18px rgba(0, 0, 0, 0.5);
  z-index: 5;
  button, input, select { ${wideFont} font-size: 12px; line-height: 17px; }
`;
const DialogHead = styled.div`
  display: flex;
  align-items: center;
  height: 37px;
  padding: 0 23px 0 9px;
  gap: 47px;
  background: #fff;
`;
const DialogTitle = styled.h1`
  flex: 1;
  margin: 0;
  font-size: 14px;
  font-weight: 400;
`;
const HelpButton = styled.button`
  &&& { font-size: 16px; }
`;
const DialogBody = styled.div`
  ${wideFont}
  padding: 9px 9px 10px;
`;
const TopPart = styled.div`
  display: flex;
  gap: 14px;
  padding-bottom: 16px;
  border-bottom: 1px solid #dcdcdc;
`;
const Inputs = styled.div`
  display: grid;
  grid-template-columns: 64px 404px;
  grid-auto-rows: 26px;
  row-gap: 4px;
  align-items: center;
  padding-top: 6px;
`;
const TextBox = styled.input`
  width: 100%;
  height: 26px;
  padding: 0 5px 2px;
  border: 1px solid #abadb3;
  outline: 0;
  background: #fff;
  color: #000;
`;
const Combo = styled.div`
  display: flex;
  height: 26px;
  border: 1px solid #abadb3;
  background: #fff;
`;
const ComboInput = styled.input`
  flex: 1;
  border: 0;
  outline: 0;
  color: #000;
  background:
    linear-gradient(#000, #000) 58px 2px / 2px 17px no-repeat,
    linear-gradient(#c6c6c6, #c6c6c6) 4px 2px / 54px 17px no-repeat,
    #fff;
  padding: 0 4px 2px;
`;
const ComboButton = styled.button`
  display: grid;
  place-items: center;
  width: 21px;
  border: 1px solid #abadb3;
  background: #e1e1e1;
`;
const Buttons = styled.div`
  display: flex;
  flex-direction: column;
  gap: 10px;
`;
const PushButton = styled.button`
  width: 112px;
  height: 29px;
  padding-top: 2px;
  border: ${(p) => (p.$primary ? "2px solid #0078d7" : "1px solid #adadad")};
  background: #e1e1e1;
  color: #000;
`;
const Lists = styled.div`
  display: grid;
  grid-template-columns: 1fr 1fr;
  column-gap: 14px;
  padding-top: 17px;
`;
const ListColumn = styled.div`
  display: flex;
  flex-direction: column;
  button { align-self: flex-end; margin: 4px 1px 0 0; }
`;
const ListFrame = styled.div`
  display: flex;
  height: 140px;
  margin-top: 3px;
  padding: 2px 2px 2px 1px;
  border: 1px solid #828790;
  background: #fff;
`;
const ListBox = styled.select`
  flex: 1;
  height: 136px;
  padding: 0;
  border: 0;
  outline: 0;
  overflow: hidden;
  background: #fff;
  color: #000;
  option { height: 17px; min-height: 17px; padding: 0 3px; line-height: 17px; }
  option:checked { background: #0078d7 linear-gradient(#0078d7, #0078d7); color: #fff; }
`;
const ListScroll = styled.div`
  display: flex;
  flex-direction: column;
  align-items: center;
  width: 19px;
  padding: 5px 0;
  background: #f0f0f0;
`;
const ListTrack = styled.div`
  flex: 1;
  width: 19px;
  padding-top: ${(p) => p.$top}px;
  margin-top: 7px;
  &::before { content: ""; display: block; height: ${(p) => p.$size}px; background: #cdcdcd; }
`;
const DialogFoot = styled.div`
  display: flex;
  justify-content: flex-end;
  gap: 15px;
  padding: 16px 1px 0 0;
`;

const fieldNames = ["Police_Force", "Road_Surface_Conditions", "Road_Type", "Speed_limit", "Time", "Urban_or_Rural_Area", "Weather_Conditions", "Vehicle_Type"];

const ScrollMark = ({ up }) => (
  <Svg w={11} h={8} stroke="#505050" strokeWidth="2"><path d={up ? "M1 7L5.500 2L10 7" : "M1 1L5.500 6L10 1"} /></Svg>
);

const ListWithScroll = ({ id, items, selected, top, size }) => (
  <ListFrame>
    <ListBox id={id} size={8} defaultValue={selected}>
      {items.map((t) => <option key={t} value={t}>{t}</option>)}
    </ListBox>
    <ListScroll aria-hidden="true">
      <ScrollMark up />
      <ListTrack $top={top} $size={size} />
      <ScrollMark />
    </ListScroll>
  </ListFrame>
);

function CalculatedItemDialog() {
  return (
    <Dialog role="dialog" aria-labelledby="dialog-title">
      <DialogHead>
        <DialogTitle id="dialog-title">Insert Calculated Item in "Vehicle_Type"</DialogTitle>
        <HelpButton aria-label="Help">?</HelpButton>
        <IconButton aria-label="Close dialog"><Svg w={13} h={13} stroke="#000" strokeWidth="1.200"><path d="M.5.5L12.500 12.500M12.500.5L.5 12.500" /></Svg></IconButton>
      </DialogHead>
      <DialogBody>
        <TopPart>
          <Inputs>
            <label htmlFor="item-name"><u>N</u>ame:</label>
            <Combo>
              <ComboInput id="item-name" defaultValue="Formula1" />
              <ComboButton aria-label="Show names"><Chevron w={12} color="#404040" sw={1.2} /></ComboButton>
            </Combo>
            <label htmlFor="item-formula">For<u>m</u>ula:</label>
            <TextBox id="item-formula" defaultValue="= 0" />
          </Inputs>
          <Buttons>
            <PushButton type="button" $primary><u>A</u>dd</PushButton>
            <PushButton type="button"><u>D</u>elete</PushButton>
          </Buttons>
        </TopPart>
        <Lists>
          <ListColumn>
            <label htmlFor="fields"><u>F</u>ields:</label>
            <ListWithScroll id="fields" items={fieldNames} selected="Vehicle_Type" top={58} size={36} />
            <PushButton type="button">Insert Fi<u>e</u>ld</PushButton>
          </ListColumn>
          <ListColumn>
            <label htmlFor="items"><u>I</u>tems:</label>
            <ListWithScroll id="items" items={rows.slice(0, 8).map((r) => r[0])} top={0} size={50} />
            <PushButton type="button">Insert I<u>t</u>em</PushButton>
          </ListColumn>
        </Lists>
        <DialogFoot>
          <PushButton type="button">OK</PushButton>
          <PushButton type="button">Close</PushButton>
        </DialogFoot>
      </DialogBody>
    </Dialog>
  );
}

export default function App() {
  return (
    <>
      <Global />
      <Shell>
        <TitleRow />
        <Ribbon />
        <FormulaBar />
        <Work>
          <SheetSide>
            <SheetArea>
              <Worksheet />
              <VScroll>
                <VThumb />
                <ScrollButton aria-label="Scroll down"><Triangle color="#a0a0a0" /></ScrollButton>
              </VScroll>
            </SheetArea>
            <SheetTabs>
              <TabArrows>
                <IconButton aria-label="Previous sheet"><Triangle dir="left" w={6} h={10} color="#a0a0a0" /></IconButton>
                <IconButton aria-label="Next sheet"><Triangle dir="right" w={6} h={10} color="#a0a0a0" /></IconButton>
              </TabArrows>
              <SheetTab type="button" $active>Sheet2</SheetTab>
              <SheetTab type="button">Sheet1</SheetTab>
              <TabDivider />
              <IconButton aria-label="New sheet"><Svg w={20} stroke="#e8e8e8" strokeWidth="1.300"><circle cx="10" cy="10" r="9.200" /><path d="M5 10H15M10 5V15" strokeWidth="2" /></Svg></IconButton>
              <HScrollSlot>
                <Dots />
                <HScroll>
                  <ScrollButton aria-label="Scroll left"><Triangle dir="left" w={5} h={9} color="#a0a0a0" /></ScrollButton>
                  <HThumb />
                  <ScrollButton aria-label="Scroll right"><Triangle dir="right" w={5} h={9} color="#a0a0a0" /></ScrollButton>
                </HScroll>
              </HScrollSlot>
            </SheetTabs>
          </SheetSide>
          <FieldsPane />
        </Work>
        <Status />
        <WindowsBar />
        <CalculatedItemDialog />
      </Shell>
    </>
  );
}
